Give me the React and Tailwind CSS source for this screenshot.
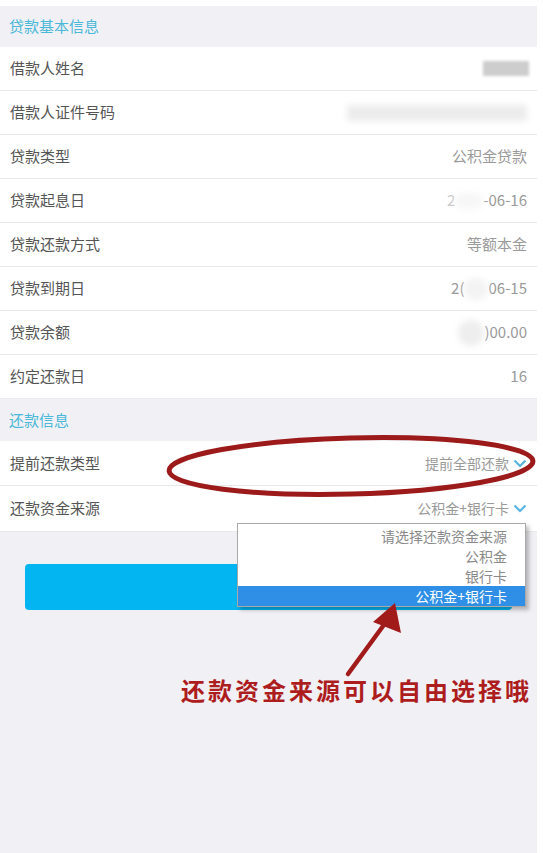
import React from "react";

const font = { fontFamily: '"Noto Sans CJK SC", "Noto Sans", sans-serif' };

function Chevron() {
  return (
    <svg width="14" height="9" viewBox="0 0 14 9" className="ml-[4px]">
      <polyline points="1.5,1.5 7,7 12.5,1.5" fill="none" stroke="#5ab4de" strokeWidth="2.2" />
    </svg>
  );
}

function SectionHeader({ title, className = "" }) {
  return (
    <div className={`flex items-center pl-[9px] text-[15px] text-[#4ab8d8] ${className}`}>
      {title}
    </div>
  );
}

function Row({ label, children, h = "h-[44px]" }) {
  return (
    <div className={`flex items-center justify-between bg-white border-b border-[#e9e9ec] pl-[10px] pr-[10px] ${h}`}>
      <span className="text-[15px] text-[#555]">{label}</span>
      <div className="flex items-center text-[15px] text-[#9a9a9a]">{children}</div>
    </div>
  );
}

export default function App() {
  return (
    <div className="w-[543px] min-h-[853px] bg-white pt-[6px]" style={font}>
      <div className="relative w-[537px] min-h-[847px] bg-[#f1f1f5]">
        <SectionHeader title="贷款基本信息" className="h-[41px]" />
        <Row label="借款人姓名">
          <div className="w-[46px] h-[15px] bg-[#cdcdcd] blur-[1.5px] mr-[-2px]" />
        </Row>
        <Row label="借款人证件号码">
          <div className="w-[180px] h-[16px] bg-[#ececec] blur-[3px]" />
        </Row>
        <Row label="贷款类型">公积金贷款</Row>
        <Row label="贷款起息日">
          <span className="text-[#c9c9c9]">2</span>
          <span className="inline-block w-[28px] h-[16px] bg-[#f7f7f7] rounded-full blur-[3px]" />
          <span>-06-16</span>
        </Row>
        <Row label="贷款还款方式">等额本金</Row>
        <Row label="贷款到期日">
          <span>2(</span>
          <span className="inline-block w-[24px] h-[22px] bg-[#f3f3f3] rounded-full blur-[3px]" />
          <span>06-15</span>
        </Row>
        <Row label="贷款余额">
          <span className="inline-block w-[26px] h-[26px] bg-[#eeeeee] rounded-full blur-[3px]" />
          <span>)00.00</span>
        </Row>
        <Row label="约定还款日">16</Row>
        <SectionHeader title="还款信息" className="h-[42px]" />
        <Row label="提前还款类型" h="h-[45px]">
          <span className="text-[14px]">提前全部还款</span>
          <Chevron />
        </Row>
        <Row label="还款资金来源" h="h-[46px]">
          <span className="text-[14px]">公积金+银行卡</span>
          <Chevron />
        </Row>

        <div className="px-[25px] pt-[32px]">
          <button className="w-full h-[46px] rounded-[4px] bg-[#03b5f0] text-white text-[16px]">
            提交申请
          </button>
        </div>

        {/* dropdown */}
        <div className="absolute left-[237px] top-[517px] w-[289px] bg-white border border-[#a9a9a9] shadow-[3px_3px_4px_rgba(0,0,0,0.25)] text-[14px] text-[#8a8a8a]">
          <div className="h-[20px] leading-[20px] text-right pr-[18px] mt-[2px]">请选择还款资金来源</div>
          <div className="h-[20px] leading-[20px] text-right pr-[18px]">公积金</div>
          <div className="h-[20px] leading-[20px] text-right pr-[18px]">银行卡</div>
          <div className="h-[20px] leading-[20px] text-right pr-[18px] bg-[#2f8fe6] text-white">公积金+银行卡</div>
        </div>

        {/* annotation */}
        <svg className="absolute left-0 top-0 pointer-events-none" width="537" height="720" viewBox="0 0 537 720">
          <ellipse cx="351" cy="460" rx="182" ry="28" fill="none" stroke="#9c1a1a" strokeWidth="5" transform="rotate(-1.5 351 460)" />
          <line x1="348" y1="668" x2="386" y2="616" stroke="#a21b1b" strokeWidth="4.5" strokeLinecap="round" />
          <polygon points="395,597 401,627 373,616" fill="#a21b1b" />
        </svg>
        <div className="absolute left-[181px] top-[666px] text-[24px] font-bold tracking-[3px] text-[#ad1d1d] leading-[36px]">
          还款资金来源可以自由选择哦
        </div>
      </div>
    </div>
  );
}
